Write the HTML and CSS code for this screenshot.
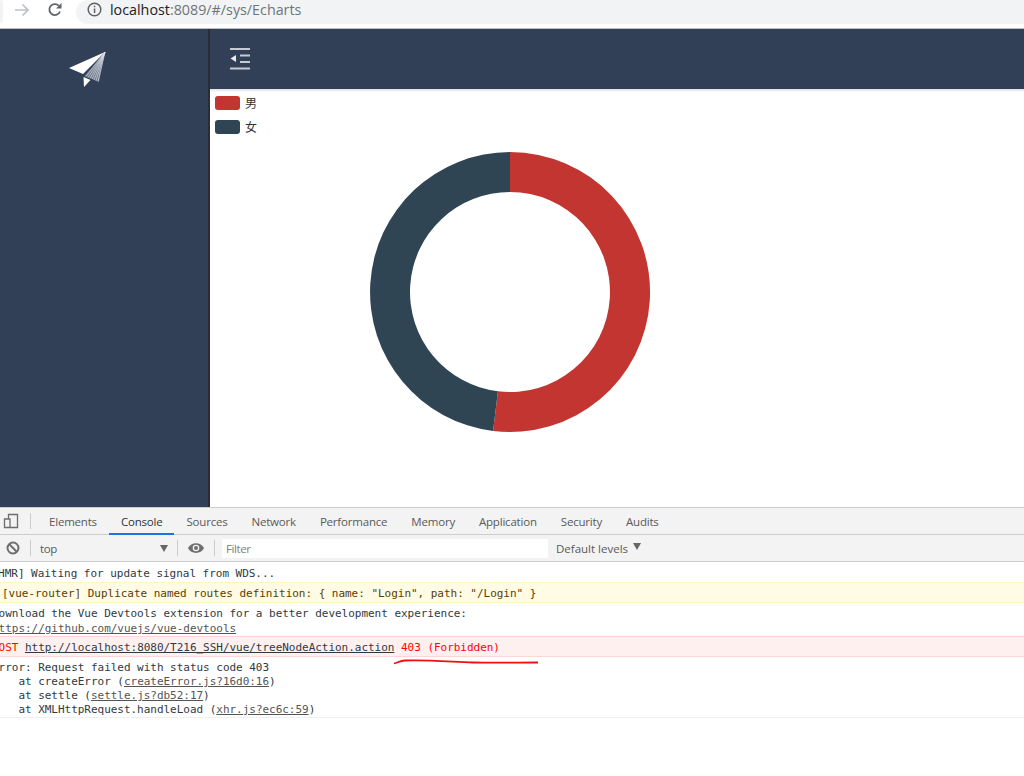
FILE: index.html
```html
<!DOCTYPE html>
<html lang="zh">
<head>
<meta charset="utf-8">
<title>Echarts</title>
<link rel="stylesheet" href="styles.css">
</head>
<body>
<div class="browser-bar">
  <div class="back-tip"></div>
  <svg class="nav-icon forward" width="16" height="16" viewBox="0 0 16 16"><path d="M1 8h13M8.500 2.500 14 8l-5.500 5.500" fill="none" stroke="#bdc1c6" stroke-width="1.700"/></svg>
  <svg class="nav-icon reload" width="16" height="16" viewBox="0 0 16 16"><path d="M13 9.500A5.500 5.500 0 1 1 11.700 3.600" fill="none" stroke="#5f6368" stroke-width="1.800"/><path d="M14.500 1v5.500H9z" fill="#5f6368"/></svg>
  <div class="omnibox">
    <svg class="info" width="15" height="15" viewBox="0 0 15 15"><circle cx="7.500" cy="7.500" r="6.300" fill="none" stroke="#5f6368" stroke-width="1.500"/><path d="M6.800 6.500h1.500v4.500H6.800zM6.800 3.800h1.500v1.500H6.800z" fill="#5f6368"/></svg>
    <span class="host">localhost</span><span class="path">:8089/#/sys/Echarts</span>
  </div>
</div>

<div class="app">
  <aside class="sidebar">
    <svg class="logo" width="40" height="38" viewBox="0 0 40 38">
      <path d="M37 2 1 18 15 24z" fill="#fff"/>
      <path d="M15.500 27 22.500 30 16 37z" fill="#fff"/>
      <path d="M37 2 16.500 26 31 32z" fill="#6f7a8d"/>
      <path d="M37 2 18 26.500M37 2 20 27.500M37 2 22 28.300M37 2 24 29M37 2 26 30M37 2 28 30.800M37 2 30 31.600" stroke="#e6e9ee" stroke-width=".6" fill="none"/>
    </svg>
  </aside>
  <main class="main">
    <header class="topbar">
      <svg class="fold" width="22" height="24" viewBox="0 0 22 24">
        <path d="M1 2h20M11 8.500h10M11 15h10M1 21.500h20" stroke="#c6cad2" stroke-width="2" fill="none"/>
        <path d="M7 8v7l-5.500-3.500z" fill="#e8eaee"/>
      </svg>
    </header>
    <div class="strip"></div>
    <section class="chart">
      <ul class="legend">
        <li class="legend-item"><span class="swatch red"></span>男</li>
        <li class="legend-item"><span class="swatch slate"></span>女</li>
      </ul>
      <svg class="donut" width="600" height="400" viewBox="0 0 600 400">
        <path d="M300 60A140 140 0 1 1 283.100 338.970L287.930 299.270A100 100 0 1 0 300 100z" fill="#c23531"/>
        <path d="M283.100 338.970A140 140 0 0 1 300 60V100A100 100 0 0 0 287.930 299.270z" fill="#2f4554"/>
      </svg>
    </section>
  </main>
</div>

<div class="devtools">
  <nav class="tabs">
    <svg class="device" width="16" height="16" viewBox="0 0 16 16"><path d="M5.500 6V1.500h9v13H1.500V6H7v8.500" fill="none" stroke="#6e6e6e" stroke-width="1.300"/></svg>
    <span class="sep"></span>
    <span class="tab">Elements</span>
    <span class="tab active">Console</span>
    <span class="tab">Sources</span>
    <span class="tab">Network</span>
    <span class="tab">Performance</span>
    <span class="tab">Memory</span>
    <span class="tab">Application</span>
    <span class="tab">Security</span>
    <span class="tab">Audits</span>
  </nav>
  <div class="toolbar">
    <svg class="clear" width="14" height="14" viewBox="0 0 14 14"><circle cx="7" cy="7" r="5.500" fill="none" stroke="#6e6e6e" stroke-width="2"/><path d="M3 3l8 8" stroke="#6e6e6e" stroke-width="2"/></svg>
    <span class="sep tool-sep"></span>
    <span class="context">top</span>
    <span class="caret"></span>
    <span class="sep tool-sep"></span>
    <svg class="eye" width="16" height="12" viewBox="0 0 16 12"><path d="M0 6c3-6.500 13-6.500 16 0-3 6.500-13 6.500-16 0z" fill="#6e6e6e"/><circle cx="8" cy="6" r="3.300" fill="#f3f3f3"/><circle cx="8" cy="6" r="2" fill="#6e6e6e"/></svg>
    <span class="sep tool-sep"></span>
    <div class="filter">Filter</div>
    <span class="levels">Default levels</span>
    <span class="levels-caret"></span>
  </div>
  <div class="console">
    <div class="msg hmr">[HMR] Waiting for update signal from WDS...</div>
    <div class="msg warn">[vue-router] Duplicate named routes definition: { name: "Login", path: "/Login" }</div>
    <div class="msg plain">Download the Vue Devtools extension for a better development experience:<br><span class="link">https://github.com/vuejs/vue-devtools</span></div>
    <div class="msg error">POST <span class="link">http://localhost:8080/T216_SSH/vue/treeNodeAction.action</span> 403 (Forbidden)</div>
    <div class="msg stack">Error: Request failed with status code 403<br>    at createError (<span class="link">createError.js?16d0:16</span>)<br>    at settle (<span class="link">settle.js?db52:17</span>)<br>    at XMLHttpRequest.handleLoad (<span class="link">xhr.js?ec6c:59</span>)</div>
  </div>
  <svg class="scribble" width="150" height="10" viewBox="0 0 150 10"><path d="M1 6.500C5 5.500 7 4 12 3.500 30 2.500 55 4.500 80 5.500 100 6 125 5.500 145 5.500" fill="none" stroke="#f01010" stroke-width="1.800"/></svg>
</div>
</body>
</html>
```
FILE: styles.css
```css
* { box-sizing: border-box; }
html, body { margin: 0; padding: 0; height: 776px; overflow: hidden; background: #fff; }
body { font-family: "Open Sans", "Noto Sans", sans-serif; display: flex; flex-direction: column; width: 1024px; }

.browser-bar { height: 29px; flex: none; display: flex; align-items: flex-start; border-bottom: 1px solid #bdbdbd; background: #fff; }
.back-tip { width: 3px; height: 23px; background: #f1f3f4; border-radius: 0 12px 12px 0; }
.nav-icon { flex: none; margin-top: 2px; }
.forward { margin-left: 11px; }
.reload { margin-left: 17px; }
.omnibox { margin-left: 13px; flex: 1; height: 24px; background: #f1f3f4; border-radius: 12px 0 0 12px; display: flex; align-items: center; padding: 0 0 5px 11px; font-size: 14.300px; }
.info { margin-right: 8px; flex: none; }
.host { color: #202124; }
.path { color: #70757a; }

.app { height: 478px; flex: none; display: flex; }
.sidebar { width: 208px; flex: none; background: #324057; display: flex; justify-content: center; align-items: flex-start; padding-top: 21px; }
.logo { margin-left: -32px; }
.main { flex: 1; border-left: 2px solid #2a2d34; display: flex; flex-direction: column; min-width: 0; }
.topbar { height: 60px; flex: none; background: #324057; display: flex; align-items: center; padding-left: 19px; }
.strip { height: 3px; flex: none; background: linear-gradient(#dfe2e9, #eef0f3 60%, #fff); }
.chart { position: relative; width: 600px; height: 400px; }
.legend { position: absolute; left: 5px; top: 3px; margin: 0; padding: 0; list-style: none; font: 12px "Noto Sans CJK SC", sans-serif; color: #333; z-index: 1; }
.legend-item { display: flex; align-items: center; height: 14px; margin-bottom: 10px; }
.swatch { width: 25px; height: 14px; border-radius: 3px; margin: 2px 5px 0 0; }
.red { background: #c23531; }
.slate { background: #2f4554; }
.donut { display: block; }

.devtools { flex: 1; position: relative; min-height: 0; }
.tabs { height: 28px; background: #f3f3f3; border-top: 1px solid #cdcdcd; border-bottom: 1px solid #cdcdcd; display: flex; align-items: stretch; font-size: 11.500px; letter-spacing: -.2px; color: #5a5a5a; padding-left: 3px; }
.device { align-self: center; flex: none; margin-right: 11px; }
.sep { width: 1px; height: 16px; background: #ccc; align-self: center; flex: none; }
.tabs .sep { margin-right: 6px; }
.tab { padding: 6px 12px 0; white-space: nowrap; }
.active { color: #333; border-bottom: 2px solid #1a73e8; margin-bottom: -1px; }
.toolbar { height: 27px; background: #f3f3f3; border-bottom: 1px solid #cdcdcd; display: flex; align-items: center; font-size: 11.500px; letter-spacing: -.4px; color: #5a5a5a; padding-left: 6px; }
.clear { flex: none; margin-right: 10px; }
.context { width: 129px; padding-left: 9px; flex: none; }
.caret { width: 17px; flex: none; height: 6px; }
.caret::before, .levels-caret::before { content: ""; display: block; width: 0; height: 0; border-left: 4px solid transparent; border-right: 4px solid transparent; border-top: 7px solid #666; }
.eye { margin: 0 10px; flex: none; }
.filter { width: 326px; height: 19px; background: #fff; margin-left: 7px; padding: 2px 0 0 4px; color: #808080; flex: none; }
.levels { margin-left: 8px; white-space: nowrap; letter-spacing: 0; }
.levels-caret { margin: 0 0 4px 5px; flex: none; }

.console { font: 11px/14px "DejaVu Sans Mono", monospace; letter-spacing: -.026px; color: #303942; border-bottom: 1px solid #f0f0f0; }
.msg { white-space: pre; }
.hmr { margin-left: -8.500px; height: 20px; padding-top: 5px; }
.warn { background: #fffbe5; border-top: 1px solid #fff5c2; border-bottom: 1px solid #fff5c2; color: #5c3c00; height: 21px; padding: 4px 0 0 2px; }
.plain { margin-left: -8px; padding-top: 3px; height: 33px; line-height: 15px; }
.error { background: #fff0f0; border-top: 1px solid #ffd6d6; border-bottom: 1px solid #ffd6d6; color: #f00; height: 21px; padding-top: 4px; text-indent: -8px; }
.error .link { color: #303942; }
.stack { margin-left: -8px; padding-top: 4px; height: 60px; }
.link { text-decoration: underline; color: #545454; }
.scribble { position: absolute; left: 393px; top: 150px; }
```
